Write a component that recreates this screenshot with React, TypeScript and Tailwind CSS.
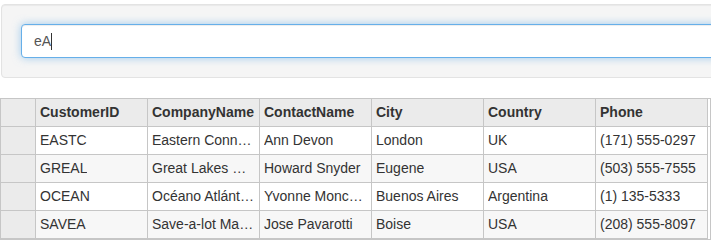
import React from "react";

const cols = ["CustomerID", "CompanyName", "ContactName", "City", "Country", "Phone"];
const rows = [
  ["EASTC", "Eastern Connection", "Ann Devon", "London", "UK", "(171) 555-0297"],
  ["GREAL", "Great Lakes Food Market", "Howard Snyder", "Eugene", "USA", "(503) 555-7555"],
  ["OCEAN", "Océano Atlántico Ltda.", "Yvonne Moncada", "Buenos Aires", "Argentina", "(1) 135-5333"],
  ["SAVEA", "Save-a-lot Markets", "Jose Pavarotti", "Boise", "USA", "(208) 555-8097"],
];

export default function App() {
  return (
    <div
      className="w-[711px] h-[242px] overflow-hidden bg-white text-[#333] text-[14px]"
      style={{ fontFamily: '"Liberation Sans", Arial, Helvetica, sans-serif' }}
    >
      <div className="pt-[4px]">
        <div className="w-[760px] ml-[1px] p-[19px] bg-[#f5f5f5] border border-[#e3e3e3] rounded-[4px] shadow-[inset_0_1px_1px_rgba(0,0,0,0.05)]">
          <div className="h-[34px] bg-white border border-[#66afe9] rounded-[4px] px-[12px] flex items-center text-[#555] shadow-[inset_0_1px_1px_rgba(0,0,0,0.075),0_0_8px_rgba(102,175,233,0.6)]">
            <span>eA</span>
            <span className="inline-block w-px h-[17px] bg-[#333]" />
          </div>
        </div>
      </div>
      <div className="mt-[20px] w-[711px] border border-[#c6c6c6] bg-white">
        <div className="flex h-[28px] bg-[#ebebeb]">
          <div className="w-[35px] shrink-0 border-r border-b border-[#c6c6c6]" />
          {cols.map((c) => (
            <div
              key={c}
              className="w-[112px] shrink-0 border-r border-b border-[#c6c6c6] pl-[4px] pr-[5px] flex items-center font-bold truncate"
            >
              {c}
            </div>
          ))}
          <div className="flex-1 bg-white border-b border-[#c6c6c6]" />
        </div>
        {rows.map((r, i) => (
          <div key={r[0]} className={"flex h-[28px] " + (i % 2 === 1 ? "bg-[#f7f7f7]" : "bg-white")}>
            <div className="w-[35px] shrink-0 border-r border-b border-[#c6c6c6] bg-[#ebebeb]" />
            {r.map((v, j) => (
              <div
                key={j}
                className="w-[112px] shrink-0 border-r border-b border-[#c6c6c6] pl-[4px] pr-[5px] flex items-center"
              >
                <span className="truncate">{v}</span>
              </div>
            ))}
            <div className="flex-1 bg-white" />
          </div>
        ))}
      </div>
    </div>
  );
}
